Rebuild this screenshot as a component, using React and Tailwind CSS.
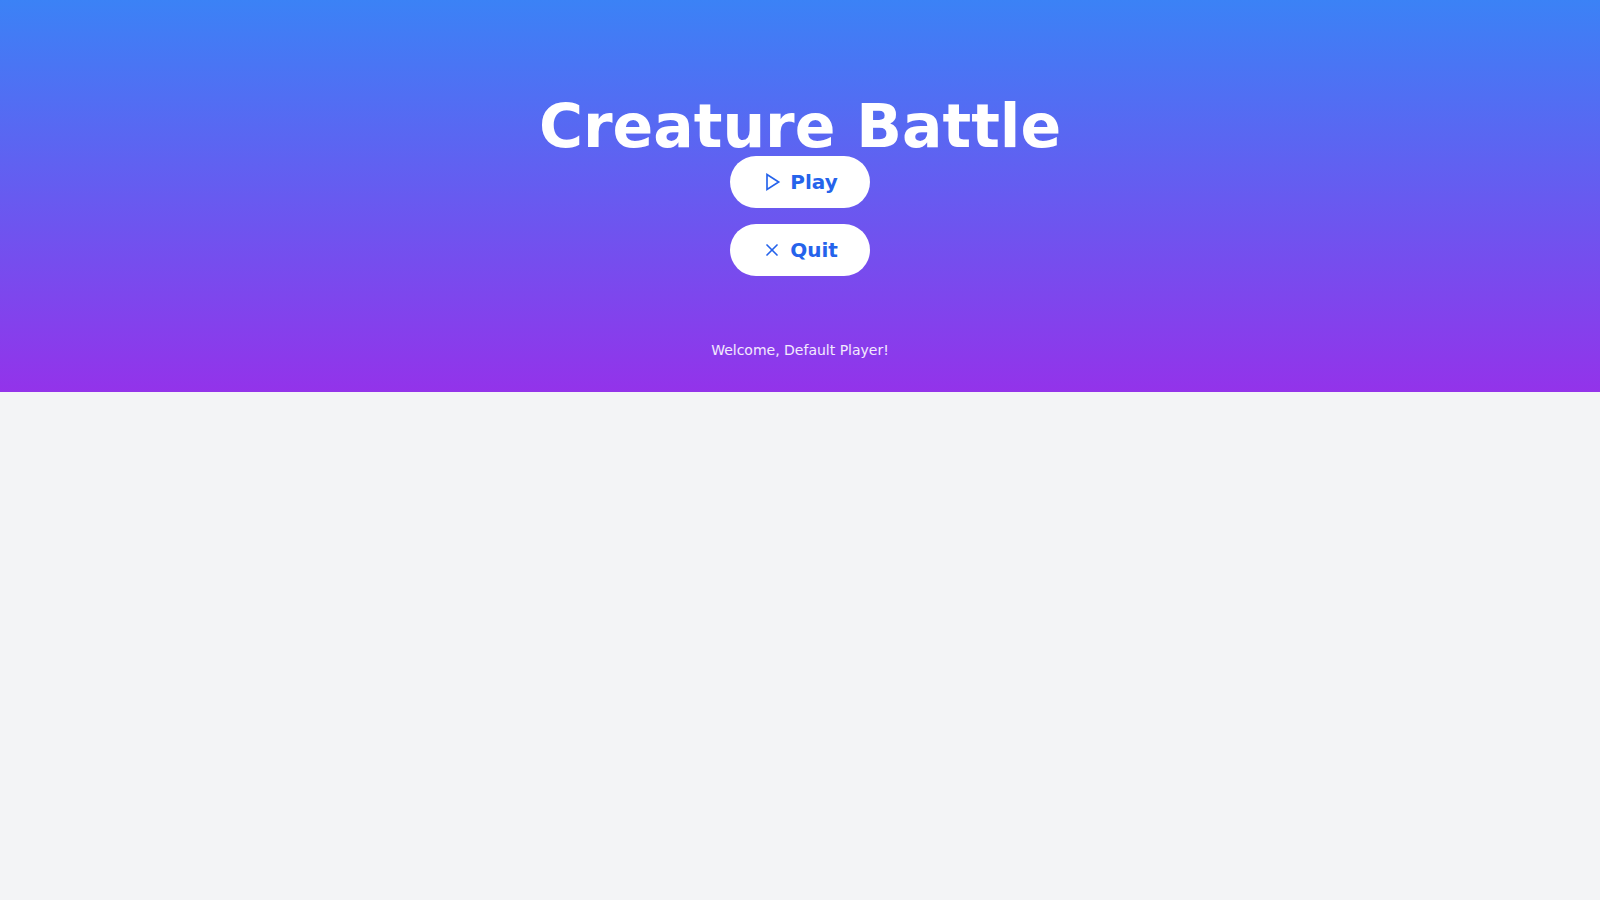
import React from "react";

function PlayIcon() {
  return (
    <svg width="20" height="20" viewBox="0 0 24 24" fill="none" stroke="currentColor" strokeWidth="2" strokeLinecap="round" strokeLinejoin="miter">
      <polygon points="6 3 20 12 6 21 6 3" />
    </svg>
  );
}

function XIcon() {
  return (
    <svg width="20" height="20" viewBox="0 0 24 24" fill="none" stroke="currentColor" strokeWidth="2" strokeLinecap="round" strokeLinejoin="round">
      <path d="M18 6 6 18" />
      <path d="m6 6 12 12" />
    </svg>
  );
}

export default function App() {
  return (
    <div className="min-h-screen bg-[#f3f4f6] font-['DejaVu_Sans',sans-serif]">
      <header className="bg-[linear-gradient(to_bottom,#3b82f6,#9333ea)] pt-24 pb-8 flex flex-col items-center">
        <h1 className="text-6xl leading-[60px] font-bold text-white">Creature Battle</h1>
        <div className="flex flex-col items-center gap-4">
          <button className="flex items-center gap-2 bg-white text-[#2563eb] rounded-full px-8 py-3 text-xl leading-7 font-bold">
            <PlayIcon />
            <span>Play</span>
          </button>
          <button className="flex items-center gap-2 bg-white text-[#2563eb] rounded-full px-8 py-3 text-xl leading-7 font-bold">
            <XIcon />
            <span>Quit</span>
          </button>
        </div>
        <p className="mt-16 text-sm leading-5 text-white/90">Welcome, Default Player!</p>
      </header>
    </div>
  );
}
